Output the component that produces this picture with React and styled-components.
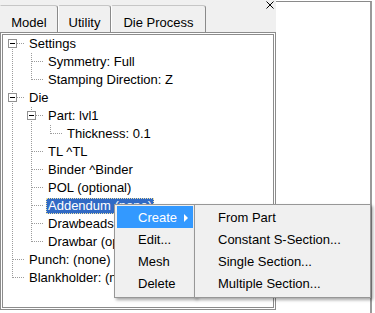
import React from "react";
import styled, { createGlobalStyle, css } from "styled-components";

const Global = createGlobalStyle`
  html, body { margin: 0; padding: 0; background: #ffffff; overflow: hidden; }
  body { font-family: "Liberation Sans", Arial, sans-serif; font-size: 13px; color: #000; }
  #root { width: 375px; height: 313px; }
`;

const Page = styled.div`
  position: relative;
  display: flex;
  width: 375px;
  height: 313px;
`;

const LeftColumn = styled.div`
  width: 276px;
  display: flex;
  flex-direction: column;
`;

const TabStrip = styled.div`
  height: 32px;
  background: #f0f0f0;
  display: flex;
  align-items: flex-end;
`;

const Tab = styled.div`
  box-sizing: border-box;
  width: ${(p) => p.$w}px;
  height: 27px;
  display: flex;
  align-items: flex-end;
  justify-content: center;
  padding-bottom: 1px;
  line-height: 16px;
  background: #f0f0f0;
  border-top: 1px solid #c6c6c6;
  border-right: 1px solid #8a8a8a;
  border-left: 1px solid ${(p) => (p.$first ? "transparent" : "#ffffff")};
  border-top-right-radius: 3px;
  border-top-left-radius: ${(p) => (p.$first ? 0 : 2)}px;
`;

const CloseButton = styled.div`
  margin-left: auto;
  margin-right: 2px;
  align-self: flex-start;
  margin-top: 1px;
  width: 8px;
  height: 8px;
  display: flex;
`;

const TreePanel = styled.div`
  box-sizing: border-box;
  height: 278px;
  border: 3px double #8c8c8c;
  background: #ffffff;
  overflow: hidden;
`;

const RightPane = styled.div`
  box-sizing: border-box;
  margin-top: 1px;
  width: 96px;
  height: 312px;
  background: #ffffff;
  border-top: 1px solid #8a8a8a;
  border-right: 2px solid #9a9a9a;
`;

const Row = styled.div`
  display: flex;
  height: 18px;
  align-items: center;
  white-space: nowrap;
`;

const dotsV = css`
  background-image: linear-gradient(to bottom, #9c9c9c 50%, transparent 50%);
  background-size: 1px 2px;
`;
const dotsH = css`
  background-image: linear-gradient(to right, #9c9c9c 50%, transparent 50%);
  background-size: 2px 1px;
`;

const Guide = styled.div`
  position: relative;
  width: 19px;
  height: 18px;
  flex: none;
  &::before {
    content: "";
    display: ${(p) => (p.$on ? "block" : "none")};
    position: absolute;
    left: 9px;
    top: 0;
    width: 1px;
    height: 18px;
    ${dotsV}
  }
`;

const Connector = styled.div`
  position: relative;
  width: 24px;
  height: 18px;
  flex: none;
  &::before {
    content: "";
    position: absolute;
    left: 9px;
    width: 1px;
    top: ${(p) => (p.$firstRoot ? 8 : 0)}px;
    height: ${(p) => (p.$firstRoot ? 10 : p.$last ? 9 : 18)}px;
    ${dotsV}
  }
  &::after {
    content: "";
    position: absolute;
    left: 10px;
    top: 8px;
    width: 12px;
    height: 1px;
    ${dotsH}
  }
`;

const Expander = styled.div`
  position: absolute;
  z-index: 1;
  left: 5px;
  top: 4px;
  box-sizing: border-box;
  width: 9px;
  height: 9px;
  border: 1px solid #919191;
  background: #ffffff;
  display: flex;
  align-items: center;
  justify-content: center;
  &::after {
    content: "";
    width: 5px;
    height: 1px;
    background: #000;
  }
`;

const Label = styled.span`
  display: inline-block;
  height: 16px;
  line-height: 16px;
  padding: 0 2px;
  ${(p) =>
    p.$selected &&
    css`
      background: #316ac5;
      color: #ffffff;
      outline: 1px dotted #efe2a8;
      outline-offset: -1px;
    `}
`;

const MenuLayer = styled.div`
  position: absolute;
  left: 114px;
  top: 204px;
  display: flex;
  align-items: flex-start;
  z-index: 5;
`;

const Menu = styled.div`
  box-sizing: border-box;
  width: ${(p) => p.$w}px;
  margin-left: ${(p) => p.$ml || 0}px;
  background: #f0f0f0;
  border: 1px solid #979797;
  padding: 1px 2px 3px 2px;
  box-shadow: 2px 2px 3px rgba(0, 0, 0, 0.35);
`;

const MenuItem = styled.div`
  height: 22px;
  line-height: 22px;
  margin-bottom: ${(p) => (p.$active ? 0 : 0)}px;
  padding-top: 1px;
  box-sizing: border-box;
  padding-left: 21px;
  padding-right: 5px;
  display: flex;
  align-items: center;
  justify-content: space-between;
  white-space: nowrap;
  ${(p) =>
    p.$active &&
    css`
      background: #3399ff;
      color: #ffffff;
    `}
`;

const Arrow = styled.span`
  width: 0;
  height: 0;
  border-left: 4px solid #ffffff;
  border-top: 4px solid transparent;
  border-bottom: 4px solid transparent;
`;

const tree = [
  {
    label: "Settings",
    children: [{ label: "Symmetry: Full" }, { label: "Stamping Direction: Z" }],
  },
  {
    label: "Die",
    children: [
      { label: "Part: lvl1", children: [{ label: "Thickness: 0.1" }] },
      { label: "TL ^TL" },
      { label: "Binder ^Binder" },
      { label: "POL (optional)" },
      { label: "Addendum (none)", selected: true },
      { label: "Drawbeads (none)" },
      { label: "Drawbar (optional)" },
    ],
  },
  { label: "Punch: (none)" },
  { label: "Blankholder: (none)" },
];

function flatten(nodes, guides = [], out = [], root = true) {
  nodes.forEach((n, i) => {
    const last = i === nodes.length - 1;
    out.push({
      ...n,
      guides,
      last,
      firstRoot: root && i === 0,
      key: out.length,
    });
    if (n.children) flatten(n.children, [...guides, !last], out, false);
  });
  return out;
}

const rows = flatten(tree);

export default function App() {
  return (
    <>
      <Global />
      <Page>
        <LeftColumn>
          <TabStrip>
            <Tab $w={58} $first>Model</Tab>
            <Tab $w={53}>Utility</Tab>
            <Tab $w={95}>Die Process</Tab>
            <CloseButton>
              <svg width="8" height="8" viewBox="0 0 8 8">
                <path d="M0.5 0.5 L7.5 7.5 M7.5 0.5 L0.5 7.5" stroke="#000" strokeWidth="1" />
              </svg>
            </CloseButton>
          </TabStrip>
          <TreePanel>
            {rows.map((r) => (
              <Row key={r.key}>
                {r.guides.map((g, gi) => (
                  <Guide key={gi} $on={g} />
                ))}
                <Connector $last={r.last} $firstRoot={r.firstRoot}>
                  {r.children && <Expander />}
                </Connector>
                <Label $selected={r.selected}>{r.label}</Label>
              </Row>
            ))}
          </TreePanel>
        </LeftColumn>
        <RightPane />
        <MenuLayer>
          <Menu $w={82}>
            <MenuItem $active>
              <span>Create</span>
              <Arrow />
            </MenuItem>
            <MenuItem>Edit...</MenuItem>
            <MenuItem>Mesh</MenuItem>
            <MenuItem>Delete</MenuItem>
          </Menu>
          <Menu $w={177} $ml={-2}>
            <MenuItem>From Part</MenuItem>
            <MenuItem>Constant S-Section...</MenuItem>
            <MenuItem>Single Section...</MenuItem>
            <MenuItem>Multiple Section...</MenuItem>
          </Menu>
        </MenuLayer>
      </Page>
    </>
  );
}
